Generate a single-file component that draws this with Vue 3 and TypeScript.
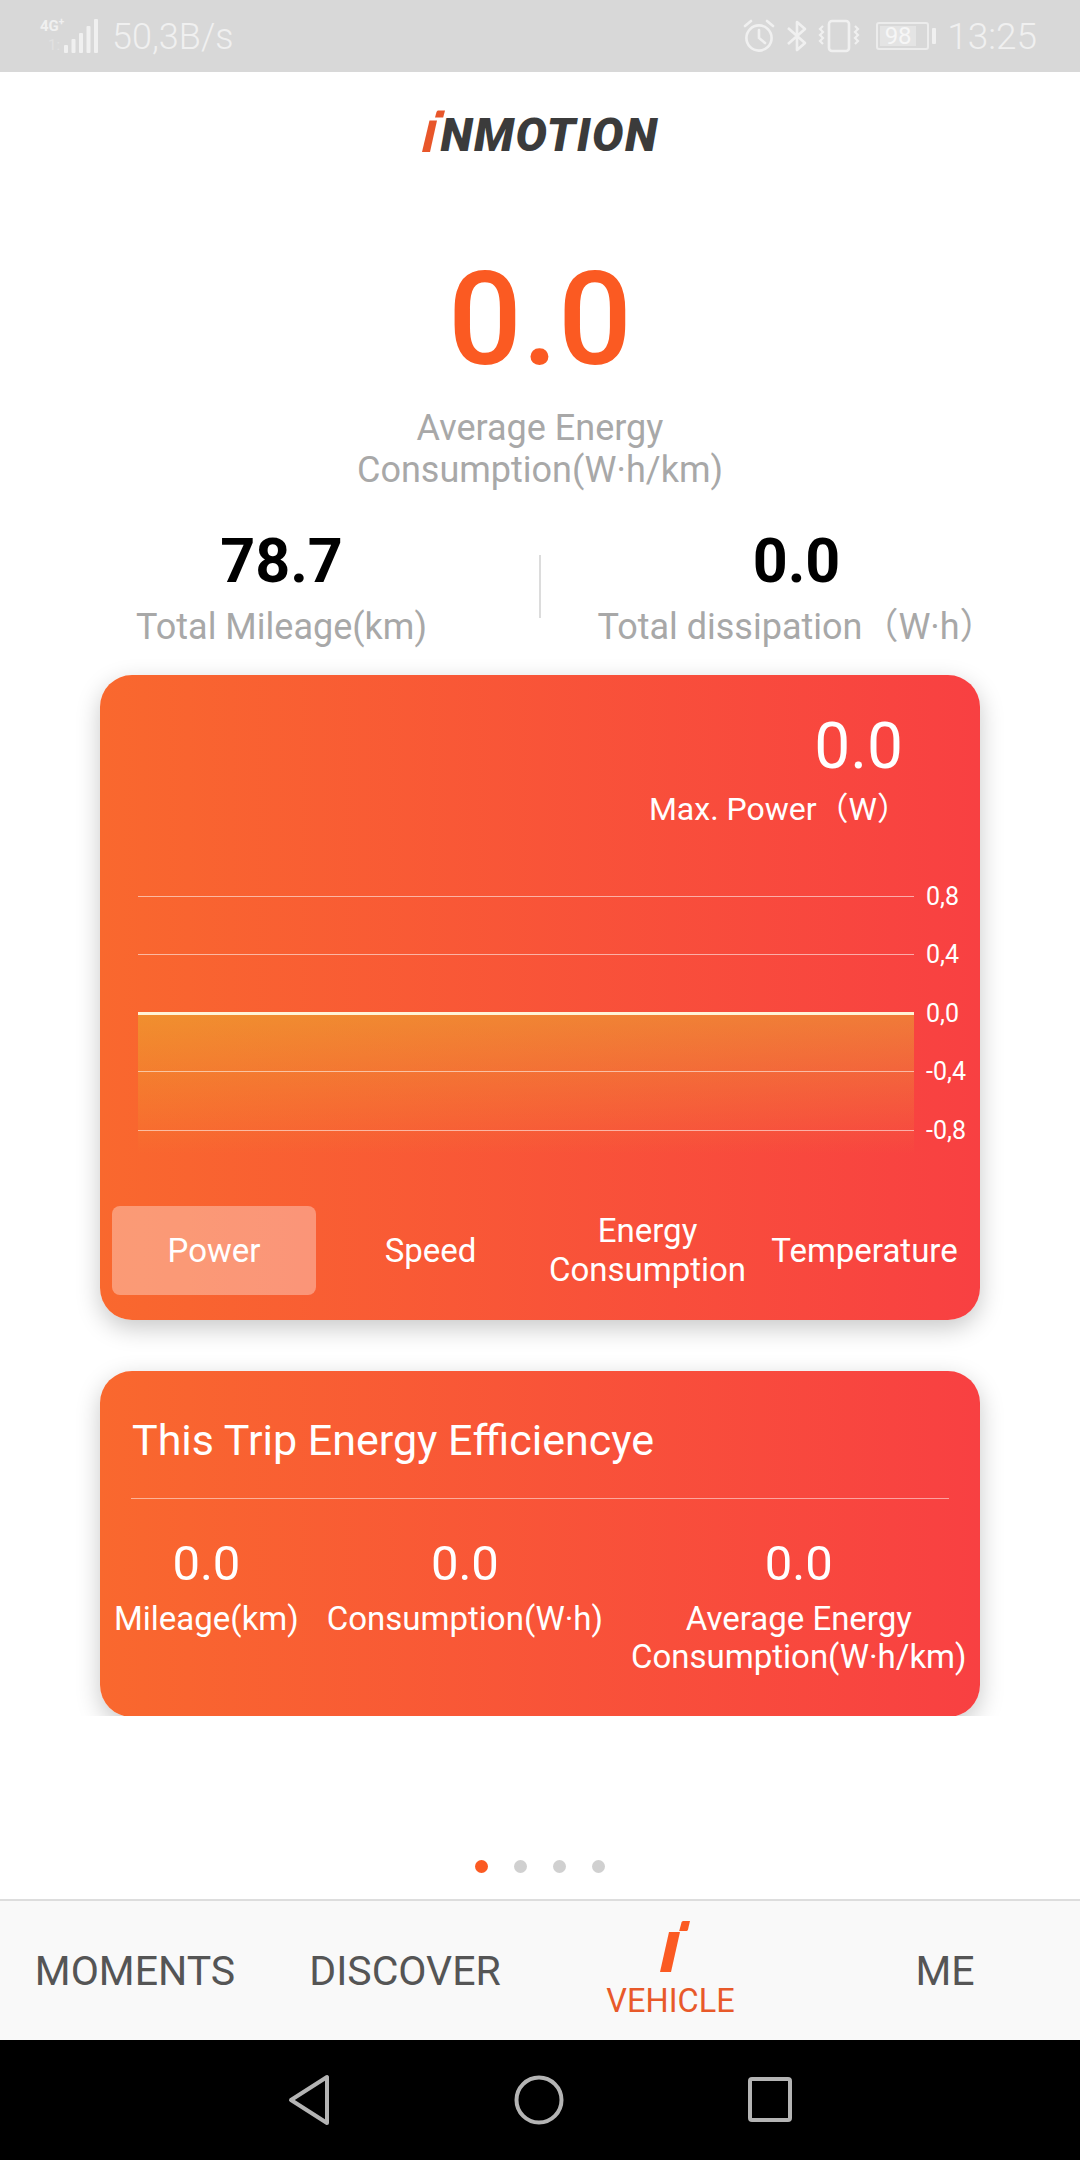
<template>
  <div class="phone">
    <!-- Status bar -->
    <header class="status">
      <div class="status-left">
        <div class="net">
          <span class="net-4g">4G<sup>+</sup></span>
          <span class="net-sim">1:</span>
        </div>
        <svg class="signal" viewBox="0 0 34 34" width="34" height="34">
          <rect v-for="b in signalBars" :key="b.x" :x="b.x" :y="b.y" width="4" :height="34 - b.y" rx="1" />
        </svg>
        <span class="status-text">50,3B/s</span>
      </div>
      <div class="status-right">
        <svg class="st-icon" viewBox="0 0 34 34" width="34" height="34" fill="none" stroke="#f0f0f0" stroke-width="2.6">
          <circle cx="17" cy="19" r="12.6" />
          <path d="M17 11v8l6 5M3 7l6-5M31 7l-6-5" stroke-linecap="round" />
        </svg>
        <svg class="st-icon bt" viewBox="0 0 22 32" width="22" height="32" fill="none" stroke="#f0f0f0" stroke-width="2.6">
          <path d="M2 8l17 15-8 7V2l8 7L2 24" stroke-linejoin="round" />
        </svg>
        <svg class="st-icon vib" viewBox="0 0 44 34" width="44" height="34" fill="none" stroke="#f0f0f0" stroke-width="2.6">
          <rect x="12" y="2" width="20" height="30" rx="3" />
          <path d="M6 7l-3 3 3 3-3 3 3 3-3 3 3 3M38 7l3 3-3 3 3 3-3 3 3 3-3 3" stroke-width="2.2" />
        </svg>
        <div class="battery"><span class="battery-level">98</span></div>
        <span class="battery-cap"></span>
        <span class="status-text time">13:25</span>
      </div>
    </header>

    <!-- Swiped page, cut off where the pager ends -->
    <main class="page">
      <div class="logo">
        <svg class="logo-mark" viewBox="0 0 24 42" width="24" height="42">
          <path d="M8.5 10.5h7.5L9 42H1z" fill="#e8562a" />
          <path d="M15.5 2c.3-1 1-1.6 2-1.6H24l-1.8 7.2H14z" fill="#e8562a" />
        </svg>
        <span class="logo-text">NMOTION</span>
      </div>

      <div class="big-value">0.0</div>
      <div class="big-label">Average Energy<br />Consumption(W·h/km)</div>

      <div class="totals">
        <div class="total mileage">
          <div class="total-value">78.7</div>
          <div class="total-label">Total Mileage(km)</div>
        </div>
        <span class="total-divider"></span>
        <div class="total dissipation">
          <div class="total-value">0.0</div>
          <div class="total-label">Total dissipation（W·h）</div>
        </div>
      </div>

      <section class="card chart-card">
        <div class="max">
          <div class="max-value">0.0</div>
          <div class="max-label">Max. Power（W）</div>
        </div>

        <div class="chart">
          <div class="chart-fill"></div>
          <div v-for="t in ticks" :key="t" class="tick" :class="{ zero: t === '0,0' }">
            <span class="tick-line"></span>
            <span class="tick-label">{{ t }}</span>
          </div>
        </div>

        <div class="tabs">
          <div v-for="(t, i) in chartTabs" :key="t" class="tab" :class="{ active: i === 0 }">{{ t }}</div>
        </div>
      </section>

      <section class="card trip-card">
        <div class="trip-title">This Trip Energy Efficiencye</div>
        <div class="trip-divider"></div>
        <div class="trip-stats">
          <div v-for="s in tripStats" :key="s.key" class="trip-stat" :class="s.key">
            <div class="trip-value">0.0</div>
            <div class="trip-label">{{ s.label }}</div>
          </div>
        </div>
      </section>
    </main>

    <div class="dots">
      <span v-for="n in 4" :key="n" class="dot" :class="{ on: n === 1 }"></span>
    </div>

    <!-- Bottom tabs -->
    <nav class="tabbar">
      <div class="tabbar-item">MOMENTS</div>
      <div class="tabbar-item">DISCOVER</div>
      <div class="tabbar-item current">
        <svg viewBox="0 0 30 51" width="30" height="51">
          <path d="M9 11h11L11 51H0z" fill="#fb5a22" />
          <path d="M21.500 1.500c.3-1 1-1.500 2-1.500H30l-2 8.500c-.3 1-1 1.500-2 1.500h-6.800z" fill="#fb5a22" />
        </svg>
        <span>VEHICLE</span>
      </div>
      <div class="tabbar-item">ME</div>
    </nav>

    <!-- System nav -->
    <footer class="sysnav">
      <svg viewBox="0 0 46 54" width="46" height="54" fill="none" stroke="#b4b4b4" stroke-width="4" stroke-linejoin="round">
        <path d="M41 4v46L5 27z" />
      </svg>
      <svg viewBox="0 0 54 54" width="54" height="54" fill="none" stroke="#b4b4b4" stroke-width="4">
        <circle cx="27" cy="27" r="22.500" />
      </svg>
      <svg viewBox="0 0 48 50" width="48" height="50" fill="none" stroke="#b4b4b4" stroke-width="4" stroke-linejoin="round">
        <rect x="4" y="4" width="40" height="41" rx="2" />
      </svg>
    </footer>
  </div>
</template>

<script setup lang="ts">
const signalBars = [
  { x: 0, y: 26 },
  { x: 7.5, y: 20 },
  { x: 15, y: 14 },
  { x: 22.5, y: 7 },
  { x: 30, y: 0 },
]

const ticks = ['0,8', '0,4', '0,0', '-0,4', '-0,8']

const chartTabs = ['Power', 'Speed', 'Energy Consumption', 'Temperature']

const tripStats = [
  { key: 'mileage', label: 'Mileage(km)' },
  { key: 'used', label: 'Consumption(W·h)' },
  { key: 'average', label: 'Average Energy Consumption(W·h/km)' },
]
</script>

<style>
html,
body {
  margin: 0;
  background: #fff;
}
</style>

<style scoped>
.phone {
  width: 1080px;
  height: 2160px;
  display: flex;
  flex-direction: column;
  overflow: hidden;
  background: #fff;
  font-family: Roboto, "Noto Sans CJK KR", sans-serif;
}

/* ── Status bar ─────────────────────────────── */
.status {
  height: 72px;
  flex: none;
  display: flex;
  justify-content: space-between;
  align-items: center;
  padding: 0 43px 0 40px;
  background: #d8d8d8;
  color: #f0f0f0;
}
.status-left,
.status-right {
  display: flex;
  align-items: center;
}
.status-text {
  font-size: 36px;
  font-weight: 300;
  line-height: 72px;
  margin-top: 2px;
}
.time {
  font-size: 37px;
}
.net {
  width: 24px;
  height: 34px;
  display: flex;
  flex-direction: column;
  font-size: 15px;
  font-weight: 700;
  line-height: 15px;
  white-space: nowrap;
}
.net sup {
  font-size: 10px;
  line-height: 0;
}
.net-sim {
  margin-top: 4px;
  padding-left: 8px;
  opacity: 0.4;
  font-weight: 400;
}
.signal {
  fill: #f0f0f0;
  margin-right: 14px;
}
.st-icon {
  flex: none;
}
.bt {
  margin-left: 10px;
}
.vib {
  margin-left: 9px;
}
.battery {
  width: 53px;
  height: 28px;
  flex: none;
  box-sizing: border-box;
  margin-left: 15px;
  border: 2px solid #ececec;
  border-radius: 3px;
  padding: 2px;
  display: flex;
}
.battery-level {
  flex: 1;
  margin-right: 9px;
  background: #e4e4e4;
  color: #f6f6f6;
  font-size: 24px;
  line-height: 20px;
  text-align: center;
}
.battery-cap {
  width: 4px;
  height: 16px;
  margin: 0 11px 0 3px;
  background: #f0f0f0;
  border-radius: 1px;
}

/* ── Page ───────────────────────────────────── */
.page {
  height: 1644px;
  flex: none;
  overflow: hidden;
  display: flex;
  flex-direction: column;
  align-items: center;
}
.logo {
  height: 42px;
  margin-top: 38px;
  display: flex;
  align-items: flex-end;
  flex: none;
}
.logo-mark {
  margin-right: -5px;
}
.logo-text {
  font-size: 47px;
  font-weight: 900;
  font-style: italic;
  line-height: 34px;
  height: 34px;
  letter-spacing: 1.5px;
  color: #3b3b3b;
}
.big-value {
  margin-top: 103px;
  font-size: 130px;
  font-weight: 500;
  line-height: 130px;
  color: #fb5a22;
  flex: none;
}
.big-label {
  margin-top: 22px;
  font-size: 36px;
  line-height: 42px;
  color: #a8a8a8;
  text-align: center;
  flex: none;
}
.totals {
  margin-top: 35px;
  width: 100%;
  display: grid;
  grid-template-columns: 1fr 2px 1fr;
  align-items: center;
  flex: none;
}
.total {
  text-align: center;
  white-space: nowrap;
}
.total.mileage {
  padding-left: 24px;
}
.total.dissipation {
  padding-right: 28px;
}
.total-value {
  font-size: 61px;
  font-weight: 700;
  line-height: 70px;
  color: #000;
}
.total-label {
  margin-top: 11px;
  font-size: 36px;
  line-height: 40px;
  color: #a8a8a8;
}
.total-divider {
  width: 2px;
  height: 63px;
  background: #dcdcdc;
}
.card {
  width: 880px;
  flex: none;
  box-sizing: border-box;
  border-radius: 32px;
  background: linear-gradient(90deg, #f9682e, #f84042);
  color: #fff;
  box-shadow: 0 8px 24px rgba(0, 0, 0, 0.22);
}

/* ── Chart card ─────────────────────────────── */
.chart-card {
  margin-top: 28px;
  height: 645px;
  padding-top: 37px;
}
.max {
  width: 100%;
  display: flex;
  flex-direction: column;
  align-items: flex-end;
  padding-right: 77px;
  box-sizing: border-box;
}
.max-value {
  font-size: 64px;
  line-height: 70px;
}
.max-label {
  margin-top: 7px;
  margin-right: -6px;
  font-size: 32px;
  line-height: 40px;
}
.chart {
  position: relative;
  margin: 38px 0 0 38px;
}
.chart-fill {
  position: absolute;
  left: 0;
  top: 147px;
  width: 776px;
  height: 140px;
  background: linear-gradient(180deg, rgba(228, 200, 45, 0.42), rgba(228, 200, 45, 0));
}
.tick {
  position: relative;
  height: 58.5px;
  display: flex;
  align-items: center;
}
.tick-line {
  width: 776px;
  height: 1px;
  background: rgba(255, 255, 255, 0.55);
}
.zero .tick-line {
  height: 3px;
  background: #fff3d6;
}
.tick-label {
  margin-left: 12px;
  font-size: 25px;
  white-space: nowrap;
}
.tabs {
  margin: 46px 0 0 5px;
  display: grid;
  grid-template-columns: repeat(4, 217px);
}
.tab {
  height: 89px;
  display: flex;
  align-items: center;
  justify-content: center;
  border-radius: 8px;
  font-size: 33px;
  line-height: 39px;
  text-align: center;
}
.tab.active {
  margin: 0 6px 0 7px;
  background: rgba(255, 255, 255, 0.34);
}

/* ── Trip card ──────────────────────────────── */
.trip-card {
  margin-top: 51px;
  height: 346px;
  padding: 44px 15px 0 14px;
}
.trip-title {
  margin-left: 18px;
  font-size: 43px;
  line-height: 50px;
}
.trip-divider {
  margin: 33px 16px 0 17px;
  height: 1px;
  background: rgba(255, 255, 255, 0.5);
}
.trip-stats {
  margin-top: 37px;
  display: flex;
  gap: 28px;
}
.trip-stat {
  text-align: center;
}
.trip-stat.average {
  width: 336px;
}
.trip-value {
  font-size: 49px;
  line-height: 56px;
}
.trip-label {
  margin-top: 8px;
  font-size: 33px;
  line-height: 38px;
  white-space: nowrap;
}
.average .trip-label {
  white-space: normal;
}

/* ── Pager dots ─────────────────────────────── */
.dots {
  flex: 1;
  display: flex;
  align-items: flex-end;
  justify-content: center;
  gap: 26px;
  padding-bottom: 26px;
}
.dot {
  width: 13px;
  height: 13px;
  border-radius: 50%;
  background: #d0d0d0;
}
.dot.on {
  background: #fb5a22;
}

/* ── Bottom tabs ────────────────────────────── */
.tabbar {
  height: 141px;
  flex: none;
  box-sizing: border-box;
  border-top: 2px solid #dddddd;
  background: #f9f9f9;
  display: grid;
  grid-template-columns: repeat(4, 1fr);
  align-items: center;
}
.tabbar-item {
  text-align: center;
  font-size: 41px;
  color: #555;
}
.tabbar-item.current {
  display: flex;
  flex-direction: column;
  align-items: center;
  padding-right: 9px;
  font-size: 32.500px;
  line-height: 40px;
  color: #e8592a;
}
.tabbar-item.current svg {
  margin: 0 0 9px 9px;
}

/* ── System nav ─────────────────────────────── */
.sysnav {
  height: 120px;
  flex: none;
  background: #000;
  display: flex;
  align-items: center;
  justify-content: center;
  gap: 180px;
}
</style>
